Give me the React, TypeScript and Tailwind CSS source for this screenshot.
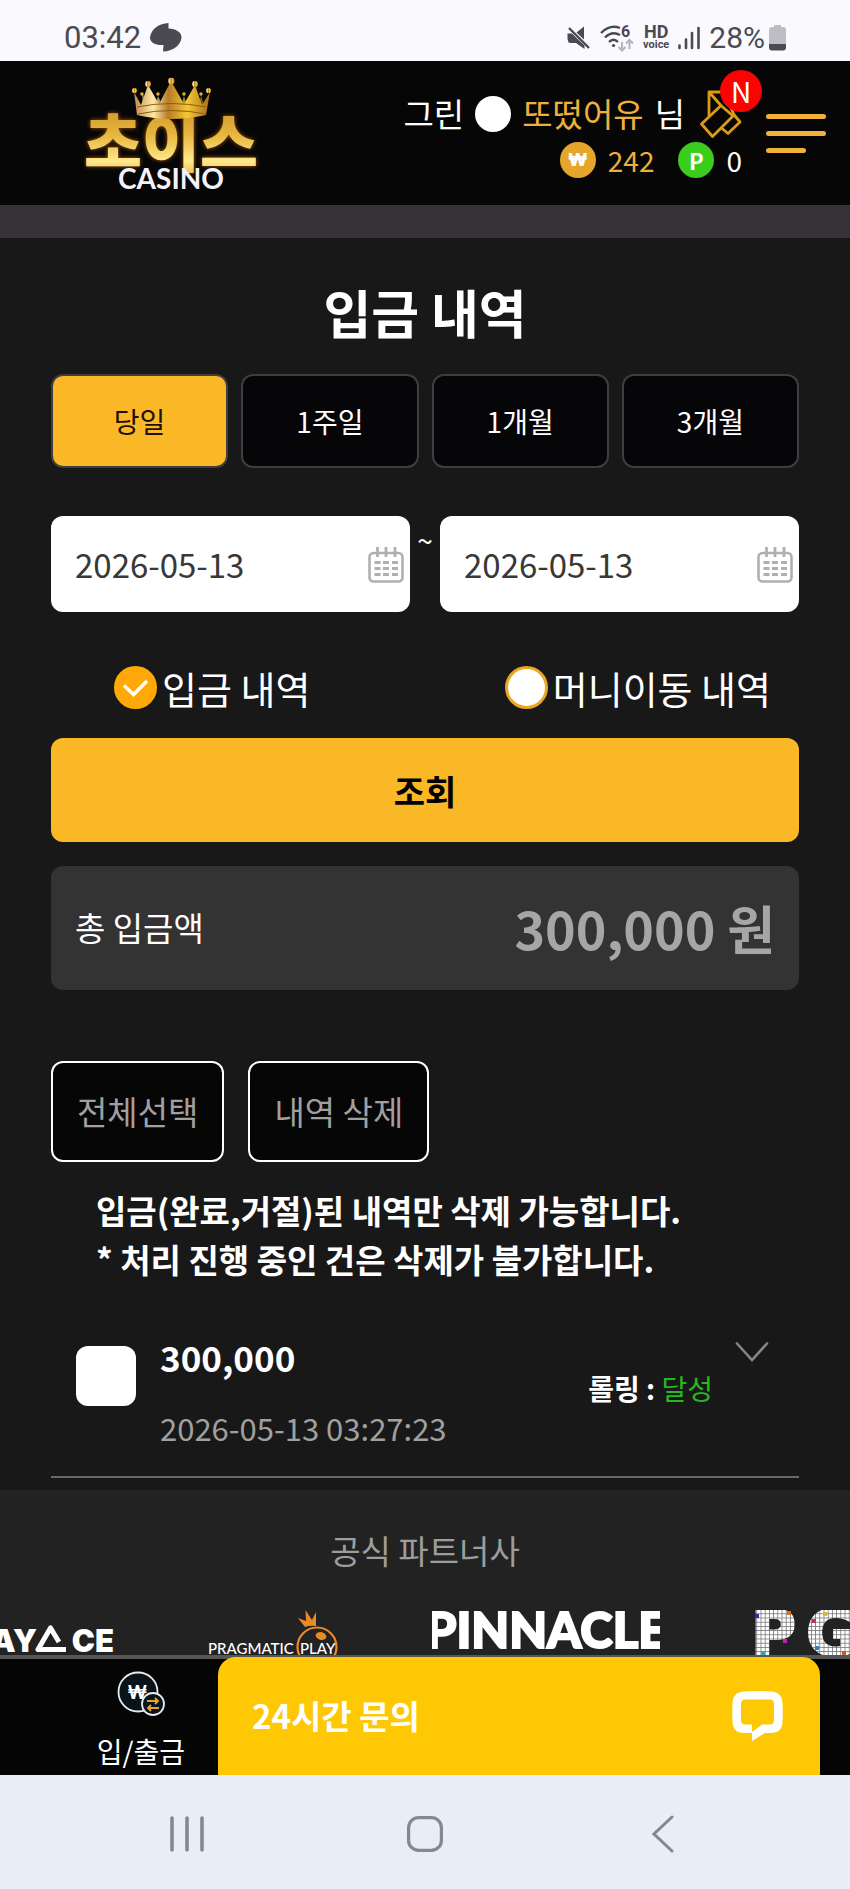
import React, { useState } from 'react';

const PERIODS = ['당일', '1주일', '1개월', '3개월'];

const HISTORY = [{ id: 1, amount: '300,000', date: '2026-05-13 03:27:23', rolling: '달성' }];

const StatusBar: React.FC = () => (
  <div className="flex h-[61px] items-center justify-between bg-[#f9f9fe] pt-[14px] pr-16 pl-16 font-['Roboto',sans-serif] text-[#4b4a52]">
    <div className="flex items-center gap-[9px]">
      <span className="text-[31px] leading-8">03:42</span>
      <svg className="h-[29px] w-8" viewBox="0 0 32 29" fill="currentColor">
        <path d="M18.500 0L18.500 5.500C26 6 31.500 9 31.500 14.500C31 22 23 28.500 13 28.500L13.500 22C6 22.500 0 20 0 14.500C1 6 9 0.500 18.500 0Z" />
      </svg>
    </div>
    <div className="flex items-center gap-[9px]">
      <svg className="h-6 w-6" viewBox="0 0 24 24" fill="currentColor">
        <path d="M0.500 7.500H5L8 10.500L17.500 19.500V23L9 17H3Q0.500 16 0.500 13Z" />
        <path d="M9.500 6.500L17 0.500V13.500Z" />
        <path d="M2 2L22 22" stroke="currentColor" strokeWidth="2.400" />
      </svg>
      <svg className="h-7 w-[34px]" viewBox="0 0 34 28" fill="none" stroke="currentColor" strokeWidth="2.400">
        <path d="M1 9Q10 0 20 4" />
        <path d="M5 13.500Q12 6.500 20 11" />
        <path d="M9 18Q13.500 13.500 18 18" />
        <circle cx="13.500" cy="21.500" r="1.600" fill="currentColor" stroke="none" />
        <path d="M22 18V26M18.500 23L22 26.500L25.500 23M29.500 25V16M26 19.500L29.500 16L33 19.500" stroke="#b4b4ba" strokeWidth="2" />
        <text x="21" y="13" fontSize="16" fontWeight="700" fill="currentColor" stroke="none">6</text>
      </svg>
      <span className="flex flex-col items-center text-center font-bold">
        <span className="text-[18px] leading-[14px]">HD</span>
        <span className="text-[11px] leading-[11px]">voice</span>
      </span>
      <svg className="h-6 w-[22px]" viewBox="0 0 22 24" stroke="currentColor" strokeWidth="2.600" strokeLinecap="round">
        <path d="M1.500 19.500V22M8 13.500V22M14 7V22M20.500 2V22" />
      </svg>
      <span className="flex items-center gap-1">
        <span className="text-[30px] leading-8">28%</span>
        <svg className="h-[26px] w-[17px]" viewBox="0 0 17 26">
          <path d="M5 0H12V2H14Q17 2 17 5V19H0V5Q0 2 3 2H5Z" fill="#bdbdc3" />
          <path d="M0 19H17V22Q17 25.500 14 25.500H3Q0 25.500 0 22Z" fill="#4b4a52" />
        </svg>
      </span>
    </div>
  </div>
);

const Logo: React.FC = () => (
  <svg className="h-[120px] w-[176px]" viewBox="84 72 176 120" role="img" aria-label="초이스 CASINO">
    <defs>
      <linearGradient id="gold" x1="0" y1="0" x2="0" y2="1">
        <stop offset="0" stopColor="#c38a26" />
        <stop offset="0.450" stopColor="#e6b53c" />
        <stop offset="0.750" stopColor="#ffe98c" />
        <stop offset="1" stopColor="#d99a25" />
      </linearGradient>
      <linearGradient id="crown" x1="0" y1="0" x2="1" y2="0">
        <stop offset="0" stopColor="#c08a4a" />
        <stop offset="0.250" stopColor="#ffe9a8" />
        <stop offset="0.450" stopColor="#b67b25" />
        <stop offset="0.700" stopColor="#f5c832" />
        <stop offset="1" stopColor="#a86c1c" />
      </linearGradient>
      <filter id="glow" x="-10%" y="-10%" width="120%" height="120%">
        <feDropShadow dx="0" dy="0" stdDeviation="2" floodColor="#b05a00" />
      </filter>
    </defs>
    <text
      x="171"
      y="165"
      textAnchor="middle"
      fontSize="63"
      fontWeight="900"
      fontFamily="'Noto Sans CJK KR', sans-serif"
      fill="url(#gold)"
      filter="url(#glow)"
    >
      초이스
    </text>
    <g fill="url(#crown)">
      <path d="M142 94L143 110H150L146 95ZM158 95L155 108H164ZM184 95L180 108H188ZM201 94L198 110L204 104Z" opacity="0.700" />
      <path d="M134 91L141 104L148 84L159 103L171 80L184 103L195 84L202 104L210 91L206 114Q171 122 137 114Z" />
      <circle cx="134.500" cy="89.500" r="2.600" />
      <circle cx="148" cy="83" r="3" />
      <circle cx="171.300" cy="80" r="3.200" />
      <circle cx="195" cy="83" r="3" />
      <circle cx="208.500" cy="89.500" r="2.600" />
      <circle cx="142" cy="93" r="1.800" />
      <circle cx="158" cy="93" r="1.800" />
      <circle cx="184" cy="93" r="1.800" />
      <circle cx="201" cy="93" r="1.800" />
    </g>
    <path d="M137 106Q171 99 206 106M138 113Q171 106 206 113" fill="none" stroke="#8d5a14" strokeWidth="1" />
    <text x="171" y="188" textAnchor="middle" fontSize="28" fontWeight="700" fontFamily="Lato, sans-serif" fill="#f4f2f8">
      CASINO
    </text>
  </svg>
);

const Header: React.FC = () => (
  <header className="flex h-36 items-center justify-between bg-[#060606] pr-6 pl-[84px]">
    <a href="#">
      <Logo />
    </a>
    <div className="flex items-center gap-6">
      <div className="flex flex-col items-end pt-2">
        <div className="flex h-[46px] items-center gap-[11px] text-[33px] text-white">
          <span>그린</span>
          <span className="size-9 rounded-full bg-white" />
          <span className="text-[#edb03a]">또떴어유</span>
          <span>님</span>
          <button className="relative ml-1" aria-label="쿠폰">
            <svg className="h-12 w-[42px]" viewBox="0 0 42 48" fill="none" stroke="#dc9b17" strokeWidth="2.800" strokeLinejoin="round">
              <path d="M1.500 34L21 15.500L33 26L12.500 46.500Z" />
              <path d="M33 23.500L40 32L28 43.500L21.500 38" />
              <path d="M9 26V2H24L34 25M9 2L21 15.500" />
            </svg>
            <span className="absolute -top-5 -right-5 flex size-[42px] items-center justify-center rounded-full bg-[#fb0203] text-[28px] leading-none text-white">
              N
            </span>
          </button>
        </div>
        <div className="flex h-[46px] items-center gap-6 text-[28px]">
          <span className="flex items-center gap-3 text-[#edb03a]">
            <span className="flex size-9 items-center justify-center rounded-full bg-[#e6a62b] font-['Inter',sans-serif] text-lg font-black text-white">₩</span>
            242
          </span>
          <span className="flex items-center gap-3 text-white">
            <span className="flex size-9 items-center justify-center rounded-full bg-[#3bcd1c] text-[22px] font-bold text-white">P</span>
            0
          </span>
        </div>
      </div>
      <button className="flex w-[60px] flex-col gap-3" aria-label="메뉴">
        <span className="h-[5px] w-full rounded-full bg-[#efb137]" />
        <span className="h-[5px] w-full rounded-full bg-[#efb137]" />
        <span className="h-[5px] w-10 rounded-full bg-[#efb137]" />
      </button>
    </div>
  </header>
);

const DateField: React.FC<{ label: string }> = ({ label }) => {
  const [value, setValue] = useState('2026-05-13');

  return (
    <div className="flex h-24 min-w-0 flex-1 items-center rounded-xl bg-white pt-0.5 pr-1.5 pl-6">
      <input
        type="text"
        aria-label={label}
        value={value}
        onChange={(e) => setValue(e.target.value)}
        className="w-full min-w-0 flex-1 bg-transparent text-[33px] text-[#383838] outline-none"
      />
      <button aria-label={`${label} 달력`}>
        <svg className="h-9 w-9" viewBox="0 0 36 36" fill="none" stroke="#b0b0b0">
          <rect x="1.500" y="6" width="33" height="28.500" rx="4" strokeWidth="2.600" />
          <path d="M9.500 0V10M18 0V10M27 0V10" strokeWidth="2.800" />
          <path d="M6.500 15.500H12.500M15 15.500H21M24 15.500H30M6.500 21.500H12.500M15 21.500H21M24 21.500H30M6.500 27.500H12.500M15 27.500H21M24 27.500H30" strokeWidth="3" />
        </svg>
      </button>
    </div>
  );
};

const TypeRadio: React.FC<{ label: string; checked: boolean; onChange: () => void }> = ({ label, checked, onChange }) => (
  <label className="flex items-center gap-[5px] text-[38px] text-white">
    <span className="relative size-[43px]">
      <input
        type="radio"
        name="history-type"
        checked={checked}
        onChange={onChange}
        className="peer block size-[43px] appearance-none rounded-full border-3 border-[#eea51f] bg-white checked:border-[#ffa807] checked:bg-[#ffa807]"
      />
      <svg className="absolute inset-0 hidden size-[43px] peer-checked:block" viewBox="0 0 43 43" fill="none" stroke="#fff" strokeWidth="3.600">
        <path d="M10 19.500L19.500 28.500L33 15" />
      </svg>
    </span>
    {label}
  </label>
);

const Partners: React.FC = () => (
  <footer className="overflow-hidden bg-[#222222] pt-9">
    <h2 className="text-center text-[33px] leading-[48px] text-[#9d9d9d]">공식 파트너사</h2>
    <div className="mt-9 flex h-[45px] gap-[93px] overflow-hidden">
      <svg className="h-[45px] w-[114px] shrink-0" viewBox="0 0 114 45" fill="#fff" fontFamily="Inter, sans-serif" fontWeight="900" fontSize="31">
        <text x="37" y="42" textAnchor="end">AY</text>
        <path d="M59 32L50.500 18L38 39.500H66" fill="none" stroke="#fff" strokeWidth="5" strokeLinejoin="round" />
        <text x="114" y="42" textAnchor="end">CE</text>
      </svg>
      <svg className="h-[45px] w-[132px] shrink-0" viewBox="0 0 132 45" fontFamily="Lato, sans-serif" fontSize="15" fontWeight="500">
        <circle cx="110" cy="37" r="19.500" fill="none" stroke="#e88a2a" strokeWidth="2.200" />
        <path d="M98 17L91 8L99 11L98.500 0L105 10L109 2L109 16Q103 15 98 17Z" fill="#e88a2a" />
        <ellipse cx="114" cy="26" rx="5.500" ry="3.800" fill="#e88a2a" transform="rotate(15 114 26)" />
        <text x="1" y="44" fill="#fff">PRAGMATIC</text>
        <text x="93" y="44" fill="#fff">PLAY</text>
      </svg>
      <svg className="h-[45px] w-[228px] shrink-0" viewBox="0 0 228 45" fill="#fff" stroke="#fff">
        <text x="114" y="38" textAnchor="middle" fontFamily="Lato, sans-serif" fontSize="49" fontWeight="900" strokeWidth="2">PINNACLE</text>
      </svg>
      <svg className="h-[45px] w-[104px] shrink-0" viewBox="0 0 104 45">
        <defs>
          <pattern id="cells" width="4.200" height="4.200" patternUnits="userSpaceOnUse">
            <rect width="4.200" height="4.200" fill="#77757a" />
            <rect width="3.400" height="3.400" fill="#fff" />
          </pattern>
        </defs>
        <g fill="url(#cells)" stroke="url(#cells)" strokeWidth="2" fontFamily="'DejaVu Sans', sans-serif" fontSize="62" fontWeight="700">
          <text x="-2" y="45">P</text>
          <text x="53" y="45">G</text>
        </g>
        <rect x="2" y="4" width="4" height="4" fill="#4b22b8" />
        <rect x="34" y="1" width="4" height="4" fill="#e07020" />
        <rect x="30" y="29" width="4" height="4" fill="#c020a8" />
        <rect x="8" y="41" width="4" height="4" fill="#2aa5b8" />
        <rect x="70" y="2" width="4" height="4" fill="#d8b838" />
        <rect x="59" y="9" width="4" height="4" fill="#c03060" />
        <rect x="62" y="36" width="4" height="4" fill="#3080c0" />
        <rect x="89" y="41" width="4" height="4" fill="#d05828" />
      </svg>
    </div>
  </footer>
);

const BottomNav: React.FC = () => (
  <nav className="flex h-[120px] border-t-4 border-[#565656] bg-[#050505]">
    <a href="#" className="flex w-[218px] flex-col items-center pt-3 pl-16 text-white">
      <svg className="h-[46px] w-12" viewBox="0 0 48 46">
        <circle cx="21" cy="21" r="19.500" fill="#08141a" stroke="#e8eaf0" strokeWidth="1.800" />
        <text x="20.500" y="28" textAnchor="middle" fontSize="19" fontWeight="700" fill="#fff" fontFamily="Inter, sans-serif">₩</text>
        <circle cx="36" cy="33" r="11" fill="#08141a" stroke="#e8eaf0" strokeWidth="1.800" />
        <path d="M30 30H41M38 27L41 30L38 33M42 37H31M34 34L31 37L34 40" fill="none" stroke="#e8a628" strokeWidth="1.800" />
      </svg>
      <span className="mt-2.5 text-[28px] leading-[48px]">입/출금</span>
    </a>
    <button className="-mt-0.5 mr-[30px] flex flex-1 items-center justify-between rounded-t-[18px] bg-[#ffc805] pr-9 pl-[34px] text-[33px] font-bold text-white">
      24시간 문의
      <svg className="h-[50px] w-[52px]" viewBox="0 0 52 50" fill="#fff" fillRule="evenodd">
        <path d="M12 0.500Q26 -0.500 39 0.500Q50 1 50.500 12Q51 21 50.500 31Q50 42 39 42H33L20 50V42H12Q1 42 0.500 31Q0 21 0.500 12Q1 1 12 0.500ZM13 8.500Q9 8.500 9 13V29Q9 33.500 13 33.500H20V41L30 33.500H38Q42 33.500 42 29V13Q42 8.500 38 8.500Z" />
      </svg>
    </button>
  </nav>
);

const SystemNav: React.FC = () => (
  <div className="grid h-[114px] grid-cols-3 items-center justify-items-center bg-[#e9edf8] px-[68px] pt-1">
    <button aria-label="최근 앱">
      <svg className="h-9 w-9" viewBox="0 0 36 36" stroke="#858890" strokeWidth="3.600" strokeLinecap="round">
        <path d="M3 2V34M18 2V34M33 2V34" />
      </svg>
    </button>
    <button aria-label="홈">
      <svg className="h-9 w-9" viewBox="0 0 36 36" fill="none" stroke="#858890" strokeWidth="3.200">
        <rect x="1.600" y="1.600" width="32.800" height="32.800" rx="10" />
      </svg>
    </button>
    <button aria-label="뒤로">
      <svg className="h-[38px] w-[22px]" viewBox="0 0 22 38" fill="none" stroke="#858890" strokeWidth="3" strokeLinecap="round">
        <path d="M20 2L2 19L20 36" />
      </svg>
    </button>
  </div>
);

const App: React.FC = () => {
  const [period, setPeriod] = useState(PERIODS[0]);
  const [type, setType] = useState('deposit');

  return (
    <div className="min-h-screen bg-[#181818] font-['Noto_Sans_CJK_KR',sans-serif]">
      <StatusBar />
      <Header />
      <div className="h-[33px] bg-[#353335]" />

      <main className="px-[51px] pt-[42px] pb-3">
        <h1 className="text-center text-[52px] leading-[64px] font-bold text-white">입금 내역</h1>

        {/* Period tabs */}
        <div className="mt-[30px] grid grid-cols-4 gap-[13px]">
          {PERIODS.map((name) => (
            <button
              key={name}
              onClick={() => setPeriod(name)}
              className={`h-[94px] rounded-xl border-2 border-[#3e3d40] text-[28px] ${
                period === name ? 'bg-[#fab726] text-[#1c1008]' : 'bg-[#060507] text-white'
              }`}
            >
              {name}
            </button>
          ))}
        </div>

        {/* Date range */}
        <div className="mt-12 flex">
          <DateField label="시작일" />
          <span className="w-[30px] text-center text-[28px] leading-[48px] text-white">~</span>
          <DateField label="종료일" />
        </div>

        <div className="mt-12 flex h-[54px] items-center justify-between pr-7 pl-[63px]">
          <TypeRadio label="입금 내역" checked={type === 'deposit'} onChange={() => setType('deposit')} />
          <TypeRadio label="머니이동 내역" checked={type === 'move'} onChange={() => setType('move')} />
        </div>

        <button className="mt-6 h-[104px] w-full rounded-xl bg-[#fab726] text-[34px] font-bold text-black">조회</button>

        <div className="mt-6 flex h-[124px] items-center justify-between rounded-xl bg-[#333333] px-6">
          <span className="text-[33px] text-white">총 입금액</span>
          <span className="text-[52px] font-bold text-[#a6a6a6]">300,000 원</span>
        </div>

        <div className="mt-[71px] flex gap-6">
          <button className="h-[101px] rounded-xl border-2 border-white bg-[#060606] px-6 text-[33px] text-[#a0a0a0]">전체선택</button>
          <button className="h-[101px] rounded-xl border-2 border-white bg-[#060606] px-6 text-[33px] text-[#a0a0a0]">내역 삭제</button>
        </div>

        <p className="mt-6 pl-[45px] text-[33px] leading-[49px] font-bold text-white">
          입금(완료,거절)된 내역만 삭제 가능합니다.
          <br />* 처리 진행 중인 건은 삭제가 불가합니다.
        </p>

        {/* Deposit list */}
        <ul className="mt-[46px]">
          {HISTORY.map((item) => (
            <li key={item.id} className="flex items-start border-b-2 border-[#686868] pr-[30px] pb-[26px] pl-[25px]">
              <input type="checkbox" aria-label={`${item.amount} 선택`} className="mt-4 size-[60px] appearance-none rounded-xl bg-white checked:bg-[#fab726]" />
              <div className="ml-6 flex-1">
                <p className="text-[35px] leading-[54px] font-bold text-white">{item.amount}</p>
                <p className="mt-[22px] text-[31px] leading-[44px] text-[#a0a0a0]">{item.date}</p>
              </div>
              <p className="mt-9 text-[28px] leading-[44px] font-bold text-white">
                롤링 : <span className="font-normal text-[#27b81f]">{item.rolling}</span>
              </p>
              <button className="mt-3 ml-[22px]" aria-label="펼치기">
                <svg className="h-5 w-[34px]" viewBox="0 0 34 20" fill="none" stroke="#858585" strokeWidth="2.600" strokeLinecap="round">
                  <path d="M2 1.500L17 18L32 1.500" />
                </svg>
              </button>
            </li>
          ))}
        </ul>
      </main>

      <Partners />
      <BottomNav />
      <SystemNav />
    </div>
  );
};

export default App;
